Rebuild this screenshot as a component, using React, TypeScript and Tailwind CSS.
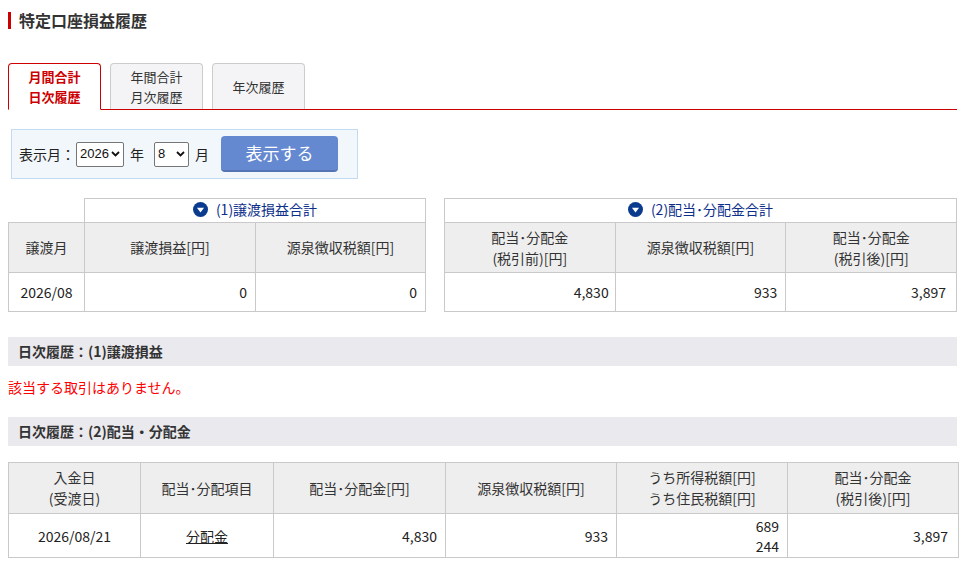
import React from 'react'

const font = { fontFamily: '"Noto Sans CJK JP", "Noto Sans", sans-serif' }

function DownIcon() {
  return (
    <svg width="15" height="15" viewBox="0 0 16 16" className="inline-block">
      <circle cx="8" cy="8" r="8" fill="#0b3b8f" />
      <path d="M4.2 6 H11.8 L8 11.2 Z" fill="#fff" />
    </svg>
  )
}

function FakeSelect({ value, width }: { value: string; width: string }) {
  return (
    <div
      className={`${width} h-[25px] border border-[#767676] rounded-[2px] bg-white flex items-center justify-between pl-[3px] pr-[3px] text-[13px] text-[#111]`}
      style={{ fontFamily: '"Liberation Sans", sans-serif' }}
    >
      <span>{value}</span>
      <svg width="9" height="6" viewBox="0 0 9 6">
        <path d="M1 1 L4.5 4.5 L8 1" fill="none" stroke="#111" strokeWidth="1.8" />
      </svg>
    </div>
  )
}

const th = 'border border-[#c9c9c9] bg-[#eeeeee] font-normal text-[#333] text-center align-middle leading-[21px]'
const td = 'border border-[#c9c9c9] bg-white text-[#222] align-middle leading-[20px]'

export default function App() {
  return (
    <div className="w-[965px] h-[566px] bg-white text-[13px] text-[#222] overflow-hidden" style={font}>
      {/* Title */}
      <div className="pt-[12px] pl-[8px] flex items-center h-[28px]">
        <div className="w-[3px] h-[17px] bg-[#cc0000]" />
        <h1 className="ml-[8px] text-[16px] font-bold text-[#333]">特定口座損益履歴</h1>
      </div>

      {/* Tabs */}
      <div className="mt-[35px] mx-[8px] flex items-end gap-[9px] border-b border-[#cc0000] h-[47px]">
        <div className="w-[93px] h-[47px] -mb-px border border-[#cc0000] border-b-white rounded-t-[4px] bg-white flex flex-col items-center justify-center text-[13px] font-bold text-[#cc0000] leading-[20px]">
          <span>月間合計</span>
          <span>日次履歴</span>
        </div>
        <div className="w-[93px] h-[46px] border border-[#cccccc] border-b-0 rounded-t-[4px] bg-[#f4f4f6] flex flex-col items-center justify-center text-[13px] text-[#333] leading-[20px]">
          <span>年間合計</span>
          <span>月次履歴</span>
        </div>
        <div className="w-[93px] h-[46px] border border-[#cccccc] border-b-0 rounded-t-[4px] bg-[#f4f4f6] flex items-center justify-center text-[13px] text-[#333]">
          年次履歴
        </div>
      </div>

      {/* Form */}
      <div className="mt-[19px] ml-[11px] w-[347px] h-[50px] border border-[#c3daf0] bg-[#f2f7fc] flex items-center pl-[7px] text-[14px] text-[#222]">
        <span>表示月：</span>
        <div className="ml-[1px]"><FakeSelect value="2026" width="w-[48px]" /></div>
        <span className="ml-[6px]">年</span>
        <div className="ml-[10px]"><FakeSelect value="8" width="w-[35px]" /></div>
        <span className="ml-[6px]">月</span>
        <button className="ml-[12px] w-[117px] h-[36px] rounded-[4px] bg-[#6489d0] border-b-2 border-[#5574b3] text-white text-[17px]">
          表示する
        </button>
      </div>

      {/* Summary tables */}
      <div className="mt-[19px] mx-[8px] flex gap-[18px] text-[14px]">
        <table className="border-collapse table-fixed w-[417px]">
          <colgroup>
            <col className="w-[76px]" />
            <col className="w-[171px]" />
            <col className="w-[170px]" />
          </colgroup>
          <tbody>
            <tr className="h-[24px]">
              <td className="border-0"></td>
              <td colSpan={2} className="border border-[#c9c9c9] text-center text-[14px] text-[#0d2f8c]">
                <span className="inline-flex items-center gap-[8px]"><DownIcon />(1)譲渡損益合計</span>
              </td>
            </tr>
            <tr className="h-[50px]">
              <th className={th}>譲渡月</th>
              <th className={th}>譲渡損益[円]</th>
              <th className={th}>源泉徴収税額[円]</th>
            </tr>
            <tr className="h-[39px]">
              <td className={td + ' text-center'}>2026/08</td>
              <td className={td + ' text-right pr-[8px]'}>0</td>
              <td className={td + ' text-right pr-[8px]'}>0</td>
            </tr>
          </tbody>
        </table>
        <table className="border-collapse table-fixed w-[513px]">
          <tbody>
            <tr className="h-[24px]">
              <td colSpan={3} className="border border-[#c9c9c9] text-center text-[14px] text-[#0d2f8c]">
                <span className="inline-flex items-center gap-[8px]"><DownIcon />(2)配当･分配金合計</span>
              </td>
            </tr>
            <tr className="h-[50px]">
              <th className={th}>配当･分配金<br />(税引前)[円]</th>
              <th className={th}>源泉徴収税額[円]</th>
              <th className={th}>配当･分配金<br />(税引後)[円]</th>
            </tr>
            <tr className="h-[39px]">
              <td className={td + ' text-right pr-[6px]'}>4,830</td>
              <td className={td + ' text-right pr-[8px]'}>933</td>
              <td className={td + ' text-right pr-[10px]'}>3,897</td>
            </tr>
          </tbody>
        </table>
      </div>

      {/* Daily history (1) */}
      <div className="mt-[25px] mx-[8px] h-[29px] bg-[#e9e9ee] flex items-center pl-[10px] text-[14px] font-bold text-[#333]">
        日次履歴：(1)譲渡損益
      </div>
      <p className="mt-[11px] ml-[8px] text-[14px] text-[#ff0000] leading-[20px]">該当する取引はありません。</p>

      {/* Daily history (2) */}
      <div className="mt-[20px] mx-[8px] h-[29px] bg-[#e9e9ee] flex items-center pl-[10px] text-[14px] font-bold text-[#333]">
        日次履歴：(2)配当・分配金
      </div>

      <table className="mt-[16px] mx-[8px] border-collapse table-fixed w-[950px] text-[14px]">
        <colgroup>
          <col className="w-[132px]" />
          <col className="w-[133px]" />
          <col className="w-[172px]" />
          <col className="w-[171px]" />
          <col className="w-[171px]" />
          <col className="w-[171px]" />
        </colgroup>
        <tbody>
          <tr className="h-[51px]">
            <th className={th}>入金日<br />(受渡日)</th>
            <th className={th}>配当･分配項目</th>
            <th className={th}>配当･分配金[円]</th>
            <th className={th}>源泉徴収税額[円]</th>
            <th className={th}>うち所得税額[円]<br />うち住民税額[円]</th>
            <th className={th}>配当･分配金<br />(税引後)[円]</th>
          </tr>
          <tr className="h-[44px]">
            <td className={td + ' text-center'}>2026/08/21</td>
            <td className={td + ' text-center'}><a href="#" className="underline text-[#222]">分配金</a></td>
            <td className={td + ' text-right pr-[8px]'}>4,830</td>
            <td className={td + ' text-right pr-[8px]'}>933</td>
            <td className={td + ' text-right pr-[8px]'}>689<br />244</td>
            <td className={td + ' text-right pr-[10px]'}>3,897</td>
          </tr>
        </tbody>
      </table>
    </div>
  )
}
